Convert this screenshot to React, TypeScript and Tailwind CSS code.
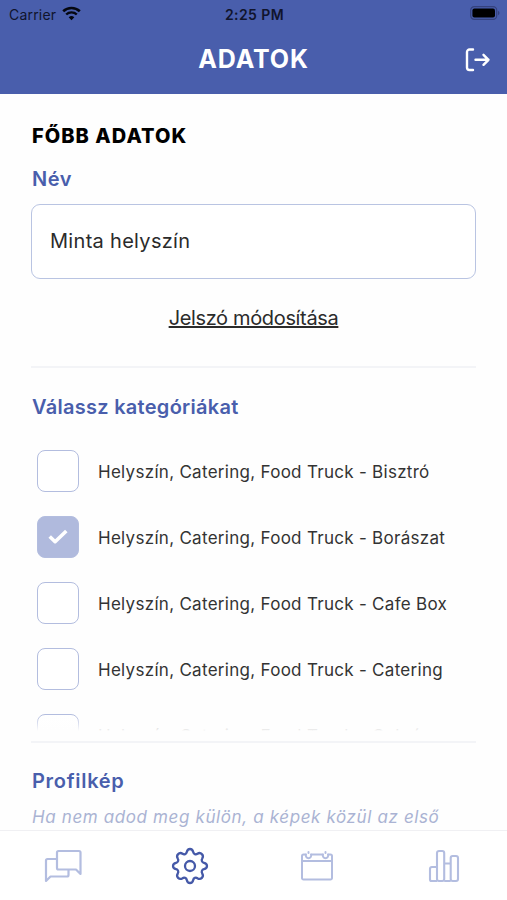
import React, { useState } from "react";

const categories = [
  { id: 1, name: "Helyszín, Catering, Food Truck - Bisztró" },
  { id: 2, name: "Helyszín, Catering, Food Truck - Borászat" },
  { id: 3, name: "Helyszín, Catering, Food Truck - Cafe Box" },
  { id: 4, name: "Helyszín, Catering, Food Truck - Catering" },
  { id: 5, name: "Helyszín, Catering, Food Truck - Cukrász" },
];

const StatusBar: React.FC = () => (
  <div className="grid h-7 grid-cols-3 items-center pr-[7px] pl-[9px] text-[14px] text-[#10142c]">
    <div className="flex items-center gap-1.5">
      <span className="tracking-[0.2px]">Carrier</span>
      <svg className="-mt-0.5" width="19" height="15" viewBox="0 0 19 15" fill="none" stroke="#05070f">
        <path d="M1.2 5.3a12 12 0 0 1 16.6 0" strokeWidth="2.6" />
        <path d="M4.2 8.5a7.6 7.6 0 0 1 10.6 0" strokeWidth="2.4" />
        <path d="M9.5 14.2 6.7 11.3a4 4 0 0 1 5.6 0z" fill="#05070f" stroke="none" />
      </svg>
    </div>
    <span className="text-center font-semibold tracking-[0.4px] whitespace-nowrap">2:25 PM</span>
    <svg className="-mt-0.5 justify-self-end" width="30" height="14" viewBox="0 0 30 14">
      <rect x="0.7" y="0.7" width="26" height="12.6" rx="3.6" fill="none" stroke="#35427e" strokeWidth="1.2" />
      <rect x="2.4" y="2.4" width="22.6" height="9.2" rx="2" fill="#000" />
      <path d="M28 4.8c2 .8 2 3.6 0 4.4z" fill="#35427e" />
    </svg>
  </div>
);

const Header: React.FC = () => (
  <header className="h-[94px] shrink-0 bg-[#495eac]">
    <StatusBar />
    <div className="grid h-16 grid-cols-[1fr_auto_1fr] items-center px-4">
      <h1 className="col-start-2 text-[25px] font-bold tracking-[0.9px] text-white">ADATOK</h1>
      <button className="justify-self-end" aria-label="Kijelentkezés">
        <svg width="26" height="26" viewBox="0 0 26 26" fill="none" stroke="#fff" strokeWidth="2.4" strokeLinecap="round" strokeLinejoin="round">
          <path d="M8 2.500H4.500A2.500 2.500 0 0 0 2 5v15.500a2.500 2.500 0 0 0 2.500 2.500H8" />
          <path d="M10.500 12.800h13M18.500 7.800l5 5-5 5" />
        </svg>
      </button>
    </div>
  </header>
);

type CategoryRowProps = {
  name: string;
  checked: boolean;
  onToggle: () => void;
};

const CategoryRow: React.FC<CategoryRowProps> = ({ name, checked, onToggle }) => (
  <li className="flex h-[66px] shrink-0 items-start gap-[19px]">
    <button
      role="checkbox"
      aria-checked={checked}
      aria-label={name}
      onClick={onToggle}
      className={`flex size-[42px] shrink-0 items-center justify-center rounded-lg border-[1.5px] border-[#b3bddf] ${
        checked ? "bg-[#b0badd]" : "bg-white"
      }`}
    >
      {checked && (
        <svg width="20" height="16" viewBox="0 0 20 16" fill="none" stroke="#fff" strokeWidth="3.6" strokeLinejoin="round">
          <path d="m1.700 7.500 5.400 5.200L18.300 2" />
        </svg>
      )}
    </button>
    <span className="text-[17px] leading-[45px] tracking-[0.29px] whitespace-nowrap text-[#333]">{name}</span>
  </li>
);

const TabBar: React.FC = () => (
  <nav className="grid h-[70px] shrink-0 grid-cols-4 items-center justify-items-center border-t border-[#f0f0f3] bg-white text-[#b3bde0]">
    <svg width="38" height="34" viewBox="0 0 38 34" fill="none" stroke="currentColor" strokeWidth="2.200" strokeLinejoin="round">
      <path d="M13 10H3.500a1.500 1.500 0 0 0-1.500 1.500V32l4.500-4.500H23a1.500 1.500 0 0 0 1.500-1.500v-5.500" />
      <path d="M14.500 2H35a1.500 1.500 0 0 1 1.500 1.500V25L32 20.500H14.500A1.500 1.500 0 0 1 13 19V3.500A1.500 1.500 0 0 1 14.500 2z" />
    </svg>
    <svg width="38" height="38" viewBox="0 0 38 38" fill="none" stroke="#4559a8" strokeWidth="2.300" strokeLinejoin="round">
      <path d="M19 2c2.500 0 2.800 1.300 3.200 3.100.4 1.900 2.600 2.800 4.200 1.700 1.600-1.100 2.900-1.400 4.500.3 1.600 1.600 1.300 2.900.3 4.500-1.100 1.600-.2 3.800 1.700 4.200 1.800.4 3.100.7 3.100 3.200s-1.300 2.800-3.100 3.200c-1.900.4-2.800 2.600-1.700 4.200 1 1.600 1.300 2.900-.3 4.500-1.600 1.600-2.900 1.300-4.500.3-1.600-1.100-3.800-.2-4.200 1.700-.4 1.800-.7 3.100-3.200 3.100s-2.800-1.300-3.200-3.100c-.4-1.900-2.600-2.800-4.200-1.700-1.600 1-2.900 1.300-4.500-.3-1.600-1.600-1.300-2.900-.3-4.500 1.100-1.600.2-3.800-1.700-4.200C3.300 21.800 2 21.500 2 19s1.300-2.800 3.100-3.200c1.900-.4 2.800-2.600 1.700-4.200-1-1.600-1.300-2.900.3-4.500 1.600-1.700 2.900-1.400 4.500-.3 1.600 1.100 3.800.2 4.200-1.700C16.200 3.300 16.500 2 19 2z" />
      <circle cx="19" cy="19" r="5" />
    </svg>
    <svg width="34" height="32" viewBox="0 0 34 32" fill="none" stroke="currentColor" strokeWidth="2" strokeLinejoin="round" strokeLinecap="round">
      <path d="M5.500 4.500h-2A1.500 1.500 0 0 0 2 6v22a1.500 1.500 0 0 0 1.500 1.500h27A1.500 1.500 0 0 0 32 28V6a1.500 1.500 0 0 0-1.500-1.500h-2M11.500 4.500h11M2 11h30" />
      <path d="M6 4.500a2.700 2.700 0 1 0 5 0M23 4.500a2.700 2.700 0 1 0 5 0M8.500 2v1M25.500 2v1" />
    </svg>
    <svg width="32" height="34" viewBox="0 0 32 34" fill="none" stroke="currentColor" strokeWidth="2.100" strokeLinejoin="round">
      <path d="M9 32H3.500A1.500 1.500 0 0 1 2 30.500V20A2 2 0 0 1 4 18h5" />
      <rect x="9" y="2" width="7.200" height="30" rx="2" />
      <path d="M16.200 14.500h6.500M16.200 32h6.500" />
      <rect x="22.700" y="7" width="7.300" height="25" rx="2" />
    </svg>
  </nav>
);

const App: React.FC = () => {
  const [name, setName] = useState("Minta helyszín");
  const [selected, setSelected] = useState<number[]>([2]);

  const toggleCategory = (id: number) => {
    setSelected((prev) =>
      prev.includes(id) ? prev.filter((item) => item !== id) : [...prev, id],
    );
  };

  return (
    <div className="flex h-[900px] w-[507px] flex-col overflow-hidden bg-[#fefefe] font-['Inter',sans-serif]">
      <Header />

      <main className="min-h-0 flex-1 overflow-hidden px-[31px]">
        {/* Main data */}
        <section className="flex flex-col border-b-2 border-[#f3f4f7] pt-7">
          <h2 className="h-7 pl-px text-[20px] leading-7 font-extrabold tracking-[1.05px] text-black">FŐBB ADATOK</h2>
          <label htmlFor="name" className="mt-[15px] h-7 pl-px text-[20px] leading-7 font-semibold tracking-[0.5px] text-[#495eac]">
            Név
          </label>
          <input
            id="name"
            value={name}
            onChange={(e) => setName(e.target.value)}
            className="mt-[11px] h-[75px] w-full rounded-[9px] border-[1.5px] border-[#b9c4e2] bg-white px-[18px] pb-0.5 text-[20px] tracking-[0.3px] text-[#2b2b2b] outline-none"
          />
          <a href="#" className="mt-[25px] mb-[34px] self-center text-[20px] leading-7 tracking-[-0.35px] text-[#2b2b2b] underline">
            Jelszó módosítása
          </a>
        </section>

        {/* Categories */}
        <section className="flex h-[375px] flex-col border-b-2 border-[#f3f4f7] pt-[25px]">
          <h3 className="h-7 pl-px text-[20px] leading-7 font-semibold tracking-[0.28px] text-[#495eac]">Válassz kategóriákat</h3>
          <div className="relative mt-[29px] h-[281px] overflow-hidden pl-1.5">
            <ul className="flex flex-col">
              {categories.map((category) => (
                <CategoryRow
                  key={category.id}
                  name={category.name}
                  checked={selected.includes(category.id)}
                  onToggle={() => toggleCategory(category.id)}
                />
              ))}
            </ul>
            <div className="pointer-events-none absolute inset-x-0 bottom-0 h-4 bg-linear-to-b from-transparent to-[#fefefe]" />
          </div>
        </section>

        {/* Profile picture */}
        <section className="pt-6 pl-px">
          <h3 className="h-7 text-[20px] leading-7 font-semibold tracking-[0.7px] text-[#495eac]">Profilkép</h3>
          <p className="mt-2 text-[17px] leading-7 tracking-[0.62px] whitespace-nowrap text-[#aab3d3] italic">
            Ha nem adod meg külön, a képek közül az első
          </p>
        </section>
      </main>

      <TabBar />
    </div>
  );
};

export default App;
